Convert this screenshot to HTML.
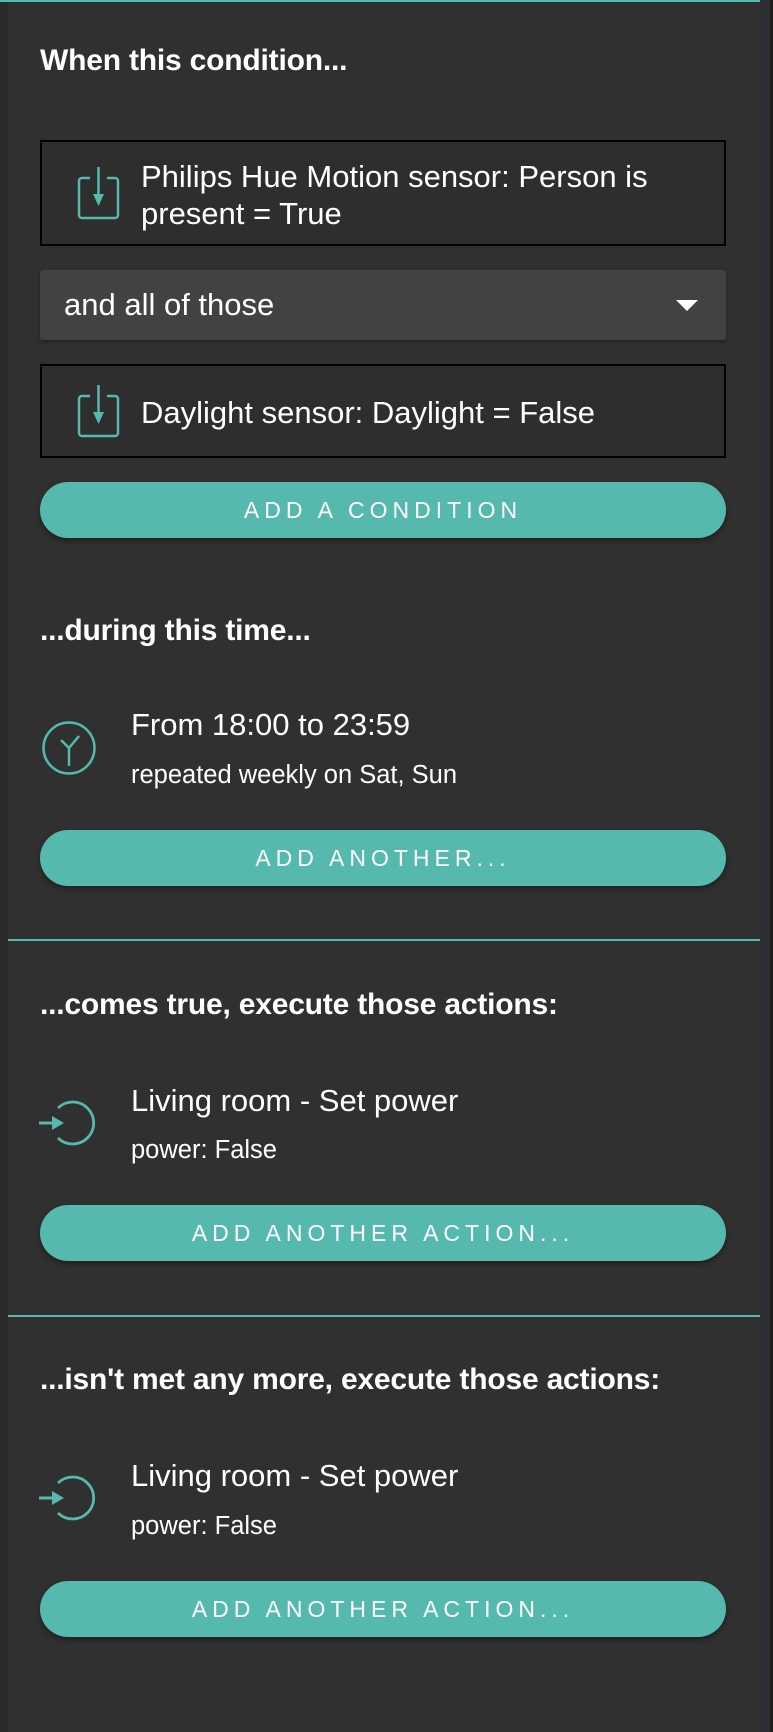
<!DOCTYPE html>
<html><head><meta charset="utf-8"><style>
*{margin:0;padding:0;box-sizing:border-box}
body{width:773px;height:1732px;background:#1e1e1e;font-family:"Liberation Sans",sans-serif;color:#fff;position:relative;overflow:hidden}
#panel{position:absolute;left:0;top:0;width:760px;height:1732px;background:#303030;border-left:8px solid #2a2a2a}
.scroll{position:absolute;left:760px;top:0;width:10px;height:1732px;background:#2c3034}
.abs{position:absolute}
.h{position:absolute;left:40px;font-weight:bold;font-size:30px;line-height:34px;letter-spacing:-0.2px;white-space:nowrap}
.box{position:absolute;left:40px;width:686px;border:2px solid #000;background:#2e2e2e}
.btn{position:absolute;left:40px;width:686px;height:56px;border-radius:28px;background:#55b9ad;color:#fff;font-size:23px;letter-spacing:5px;text-align:center;line-height:56px;box-shadow:0 3px 6px rgba(0,0,0,.35);white-space:nowrap}
.t{position:absolute;font-size:31px;line-height:30px;white-space:nowrap}
.s{position:absolute;font-size:25.5px;line-height:30px;white-space:nowrap}
.div{position:absolute;left:8px;width:752px;height:2px;background:#55b9ad}
</style></head><body>
<div id="panel"></div>
<div class="scroll"></div>
<div class="abs" style="left:0;top:0;width:760px;height:2px;background:#55b9ad"></div>

<div class="h" style="top:44px">When this condition...</div>

<div class="box" style="top:140px;height:106px"></div>
<svg class="abs" style="left:76px;top:160px" width="48" height="68" viewBox="0 0 48 68"><path d="M14 18H6a3 3 0 0 0-3 3v34a3 3 0 0 0 3 3h33a3 3 0 0 0 3-3V21a3 3 0 0 0-3-3h-8" fill="none" stroke="#55b9ad" stroke-width="2.5"/><path d="M22.5 7v34" stroke="#55b9ad" stroke-width="2.5"/><path d="M17 34h11l-5.5 12z" fill="#55b9ad"/></svg>
<div class="t" style="left:141px;top:158px;line-height:37px">Philips Hue Motion sensor: Person is<br>present = True</div>

<div class="abs" style="left:40px;top:270px;width:686px;height:70px;background:#424242;border-radius:3px;box-shadow:0 2px 4px rgba(0,0,0,.3)"></div>
<div class="t" style="left:64px;top:290px">and all of those</div>
<svg class="abs" style="left:676px;top:300px" width="22" height="12"><path d="M0 0h22L11 11z" fill="#fff"/></svg>

<div class="box" style="top:364px;height:94px"></div>
<svg class="abs" style="left:76px;top:378px" width="48" height="68" viewBox="0 0 48 68"><path d="M14 18H6a3 3 0 0 0-3 3v34a3 3 0 0 0 3 3h33a3 3 0 0 0 3-3V21a3 3 0 0 0-3-3h-8" fill="none" stroke="#55b9ad" stroke-width="2.5"/><path d="M22.5 7v34" stroke="#55b9ad" stroke-width="2.5"/><path d="M17 34h11l-5.5 12z" fill="#55b9ad"/></svg>
<div class="t" style="left:141px;top:398px">Daylight sensor: Daylight = False</div>

<div class="btn" style="top:482px">ADD A CONDITION</div>

<div class="h" style="top:614px">...during this time...</div>
<svg class="abs" style="left:40px;top:718px" width="58" height="60" viewBox="0 0 58 60"><ellipse cx="29" cy="30" rx="25.5" ry="25.5" fill="none" stroke="#55b9ad" stroke-width="2.5"/><path d="M29 30v18M29 30l-8-8M29 30l10-12" stroke="#55b9ad" stroke-width="2.5" fill="none"/></svg>
<div class="t" style="left:131px;top:710px">From 18:00 to 23:59</div>
<div class="s" style="left:131px;top:760px">repeated weekly on Sat, Sun</div>

<div class="btn" style="top:830px">ADD ANOTHER...</div>

<div class="div" style="top:939px"></div>

<div class="h" style="top:988px">...comes true, execute those actions:</div>
<svg class="abs" style="left:36px;top:1098px" width="60" height="52" viewBox="0 0 60 52"><path d="M22 10A21 21 0 1 1 22 40" fill="none" stroke="#55b9ad" stroke-width="2.8"/><path d="M3 25h14" stroke="#55b9ad" stroke-width="3"/><path d="M16 18l12 7-12 7z" fill="#55b9ad"/></svg>
<div class="t" style="left:131px;top:1086px">Living room - Set power</div>
<div class="s" style="left:131px;top:1135px">power: False</div>

<div class="btn" style="top:1205px">ADD ANOTHER ACTION...</div>

<div class="div" style="top:1315px"></div>

<div class="h" style="top:1363px">...isn't met any more, execute those actions:</div>
<svg class="abs" style="left:36px;top:1473px" width="60" height="52" viewBox="0 0 60 52"><path d="M22 10A21 21 0 1 1 22 40" fill="none" stroke="#55b9ad" stroke-width="2.8"/><path d="M3 25h14" stroke="#55b9ad" stroke-width="3"/><path d="M16 18l12 7-12 7z" fill="#55b9ad"/></svg>
<div class="t" style="left:131px;top:1461px">Living room - Set power</div>
<div class="s" style="left:131px;top:1511px">power: False</div>

<div class="btn" style="top:1581px">ADD ANOTHER ACTION...</div>
</body></html>
